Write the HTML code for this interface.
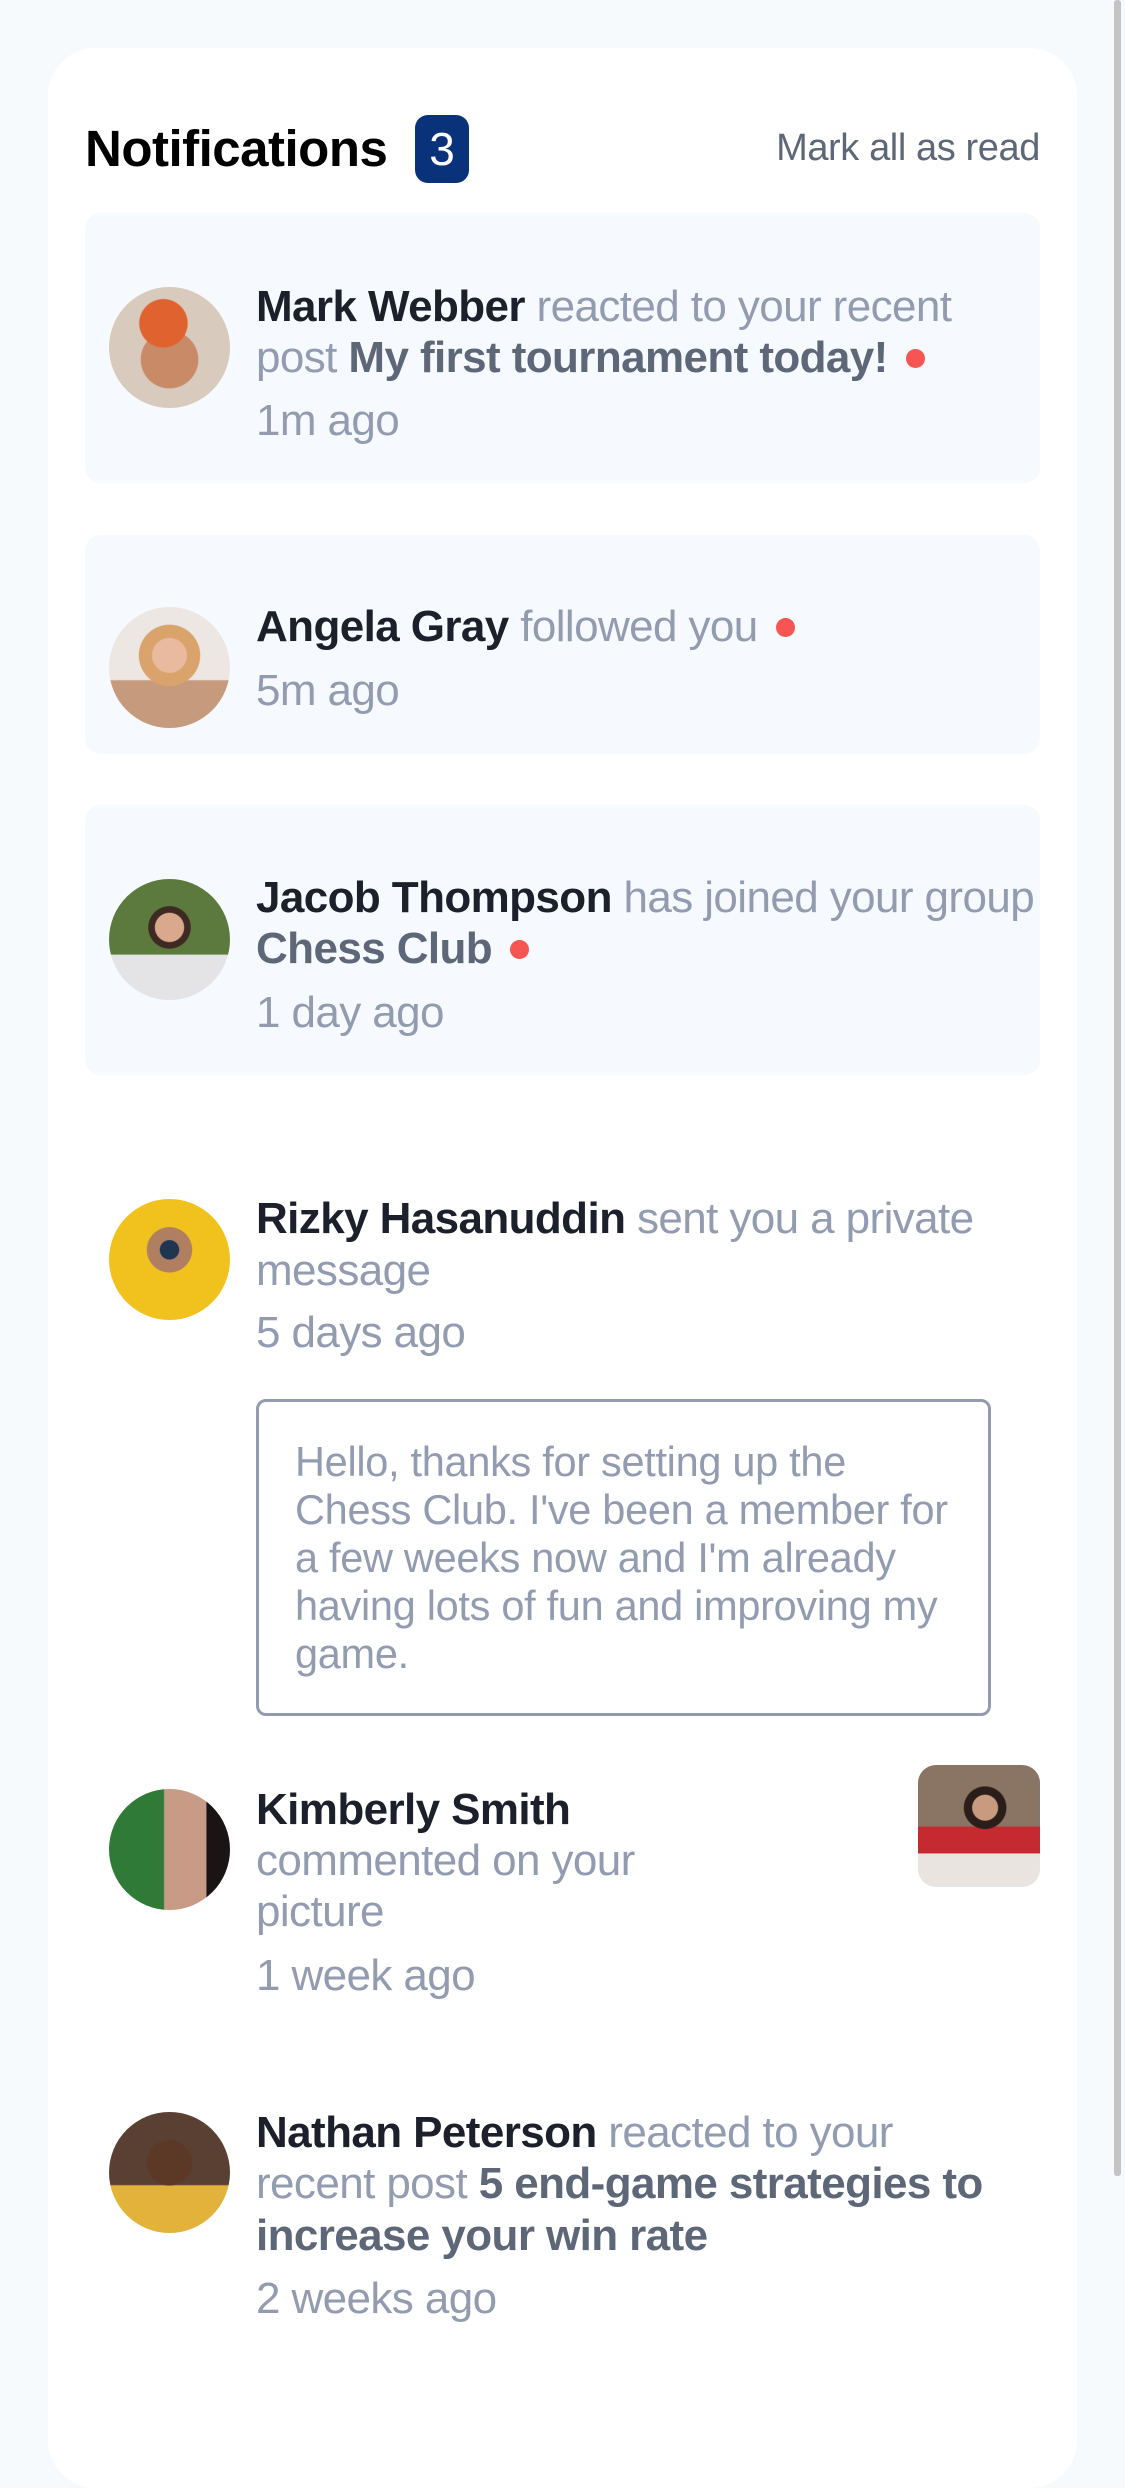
<!DOCTYPE html>
<html><head><meta charset="utf-8"><style>
*{margin:0;padding:0;box-sizing:border-box}
html,body{width:1125px;height:2436px;background:#f7fafd;overflow:hidden;font-family:"Liberation Sans",sans-serif}
.card{position:absolute;left:48px;top:48px;width:1029px;height:2440px;background:#fff;border-radius:48px}
.abs{position:absolute}
.bg{position:absolute;left:85px;width:955px;background:#f6f9fd;border-radius:16px}
.av{position:absolute;left:109px;width:121px;height:121px;border-radius:50%}
.ln{position:absolute;left:256px;height:51px;line-height:51px;font-size:44px;white-space:nowrap;color:#939bb0;letter-spacing:-0.6px}
.n{color:#1c202b;font-weight:bold}
.p{color:#5e6778;font-weight:bold}
.dot{display:inline-block;width:19px;height:19px;border-radius:50%;background:#f65552;margin-left:18px;vertical-align:4px}
.msg{position:absolute;left:256px;top:1399px;width:735px;height:317px;border:3px solid #939bb0;border-radius:10px}
.ml{position:absolute;left:295px;height:48px;line-height:48px;font-size:41.5px;color:#939bb0;white-space:nowrap;letter-spacing:-0.3px}
</style></head><body>
<div class="card"></div>
<div class="abs" style="left:1114px;top:0;width:7px;height:2176px;background:#c4c4c4;border-radius:3px"></div>

<div class="abs" style="left:85px;top:117px;font-size:51px;line-height:64px;font-weight:bold;color:#000;letter-spacing:-0.5px">Notifications</div>
<div class="abs" style="left:415px;top:115px;width:54px;height:68px;background:#0a327b;border-radius:13px;color:#fff;font-size:46px;line-height:68px;text-align:center">3</div>
<div class="abs" style="right:85px;top:125px;font-size:38px;line-height:46px;color:#5e6778;letter-spacing:-0.4px">Mark all as read</div>

<div class="bg" style="top:213px;height:270px"></div>
<div class="av" style="top:287px;background:radial-gradient(circle at 45% 30%,#e0632f 0 22%,transparent 23%),radial-gradient(circle at 50% 60%,#c98a68 0 30%,#d8cbbd 31%)"></div>
<div class="ln" style="top:281px"><span class="n">Mark Webber</span> reacted to your recent</div>
<div class="ln" style="top:332px">post <span class="p">My first tournament today!</span><span class="dot"></span></div>
<div class="ln" style="top:395px">1m ago</div>

<div class="bg" style="top:535px;height:219px"></div>
<div class="av" style="top:607px;background:radial-gradient(circle at 50% 40%,#e9b9a0 0 18%,#d9a36b 19% 32%,transparent 33%),linear-gradient(#ede7e3 60%,#c69a7d 61%)"></div>
<div class="ln" style="top:601px"><span class="n">Angela Gray</span> followed you<span class="dot"></span></div>
<div class="ln" style="top:665px">5m ago</div>

<div class="bg" style="top:805px;height:270px"></div>
<div class="av" style="top:879px;background:radial-gradient(circle at 50% 40%,#d9a88d 0 15%,#3d2a22 16% 22%,transparent 23%),linear-gradient(#5d7a3e 62%,#e4e4e6 63%)"></div>
<div class="ln" style="top:872px"><span class="n">Jacob Thompson</span> has joined your group</div>
<div class="ln" style="top:923px"><span class="p">Chess Club</span><span class="dot"></span></div>
<div class="ln" style="top:987px">1 day ago</div>

<div class="av" style="top:1199px;background:radial-gradient(circle at 50% 42%,#1f3550 0 10%,#b07f62 11% 24%,transparent 25%),#f1c21d"></div>
<div class="ln" style="top:1193px"><span class="n">Rizky Hasanuddin</span> sent you a private</div>
<div class="ln" style="top:1245px">message</div>
<div class="ln" style="top:1307px">5 days ago</div>
<div class="msg"></div>
<div class="ml" style="top:1438px">Hello, thanks for setting up the</div>
<div class="ml" style="top:1486px">Chess Club. I've been a member for</div>
<div class="ml" style="top:1534px">a few weeks now and I'm already</div>
<div class="ml" style="top:1582px">having lots of fun and improving my</div>
<div class="ml" style="top:1630px">game.</div>

<div class="av" style="top:1789px;background:linear-gradient(90deg,#2f7a36 0 45%,#c89b86 46% 80%,#1a1414 81%)"></div>
<div class="ln" style="top:1784px"><span class="n">Kimberly Smith</span></div>
<div class="ln" style="top:1835px">commented on your</div>
<div class="ln" style="top:1886px">picture</div>
<div class="ln" style="top:1950px">1 week ago</div>
<div class="abs" style="left:918px;top:1765px;width:122px;height:122px;border-radius:18px;background:radial-gradient(circle at 55% 35%,#c89a7f 0 12%,#2a1d1a 13% 20%,transparent 21%),linear-gradient(#8a7463 0 50%,#c42a2f 51% 72%,#e9e4df 73%)"></div>

<div class="av" style="top:2112px;background:radial-gradient(circle at 50% 42%,#5b3926 0 24%,transparent 25%),linear-gradient(#5a4032 60%,#e2b23a 61%)"></div>
<div class="ln" style="top:2107px"><span class="n">Nathan Peterson</span> reacted to your</div>
<div class="ln" style="top:2158px">recent post <span class="p">5 end-game strategies to</span></div>
<div class="ln" style="top:2210px"><span class="p">increase your win rate</span></div>
<div class="ln" style="top:2273px">2 weeks ago</div>
</body></html>
